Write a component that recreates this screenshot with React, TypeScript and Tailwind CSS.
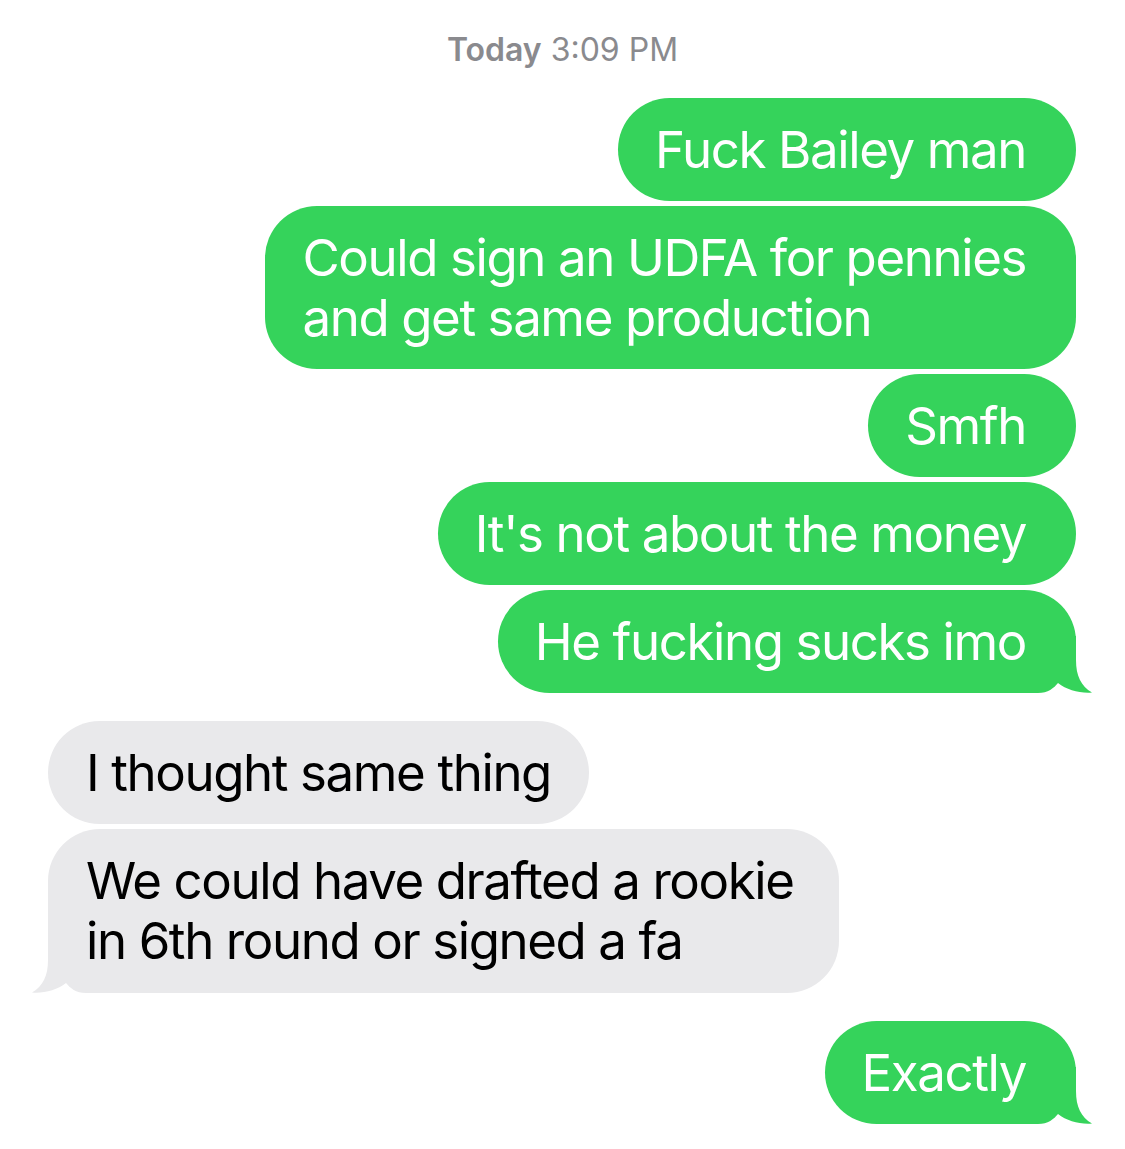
import React from "react";

const GREEN = "#35d35b";
const GRAY = "#e9e9eb";

function Tail({ color, side }: { color: string; side: "right" | "left" }) {
  return (
    <svg
      width="73"
      height="57"
      viewBox="0 0 73 57"
      className={
        side === "right"
          ? "absolute bottom-0 right-[-17px]"
          : "absolute bottom-0 left-[-17px] -scale-x-100"
      }
    >
      <path
        d="M0 0 H56 V24 C56 40 61 50 72 56.5 C60 57.5 47 54 38 47 C34 52 28 57 18 57 H0 Z"
        fill={color}
      />
    </svg>
  );
}

function Sent({ children, tail }: { children: React.ReactNode; tail?: boolean }) {
  return (
    <div className="relative rounded-[52px] bg-[#35d35b] text-white pl-[37px] pr-[50px] pt-[22px] pb-[21px] text-[51px] leading-[60px] whitespace-nowrap tracking-[-1.4px]">
      <span className="relative z-10">{children}</span>
      {tail && <Tail color={GREEN} side="right" />}
    </div>
  );
}

function Received({ children, tail }: { children: React.ReactNode; tail?: boolean }) {
  return (
    <div
      className={
        tail
          ? "relative rounded-[52px] bg-[#e9e9eb] text-black pl-[38px] pr-[45px] pt-[22px] pb-[22px] text-[51px] leading-[60px] whitespace-nowrap tracking-[-1.4px]"
          : "relative rounded-[52px] bg-[#e9e9eb] text-black pl-[38px] pr-[38px] pt-[22px] pb-[21px] text-[51px] leading-[60px] whitespace-nowrap tracking-[-1.4px]"
      }
    >
      <span className="relative z-10">{children}</span>
      {tail && <Tail color={GRAY} side="left" />}
    </div>
  );
}

export default function App() {
  return (
    <div className="w-[1125px] h-[1149px] bg-white overflow-hidden font-['Inter',sans-serif]">
      <div className="pt-[30px] text-center text-[32px] leading-[40px] text-[#8a8a8e]">
        <span className="font-semibold">Today</span> 3:09 PM
      </div>
      <div className="mt-[28px] flex flex-col items-end gap-[5px] pr-[49px]">
        <Sent>Fuck Bailey man</Sent>
        <Sent>
          Could sign an UDFA for pennies
          <br />
          and get same production
        </Sent>
        <Sent>Smfh</Sent>
        <Sent>It's not about the money</Sent>
        <Sent tail>He fucking sucks imo</Sent>
      </div>
      <div className="mt-[28px] flex flex-col items-start gap-[5px] pl-[48px]">
        <Received>I thought same thing</Received>
        <Received tail>
          We could have drafted a rookie
          <br />
          in 6th round or signed a fa
        </Received>
      </div>
      <div className="mt-[28px] flex flex-col items-end gap-[5px] pr-[49px]">
        <Sent tail>Exactly</Sent>
      </div>
    </div>
  );
}
